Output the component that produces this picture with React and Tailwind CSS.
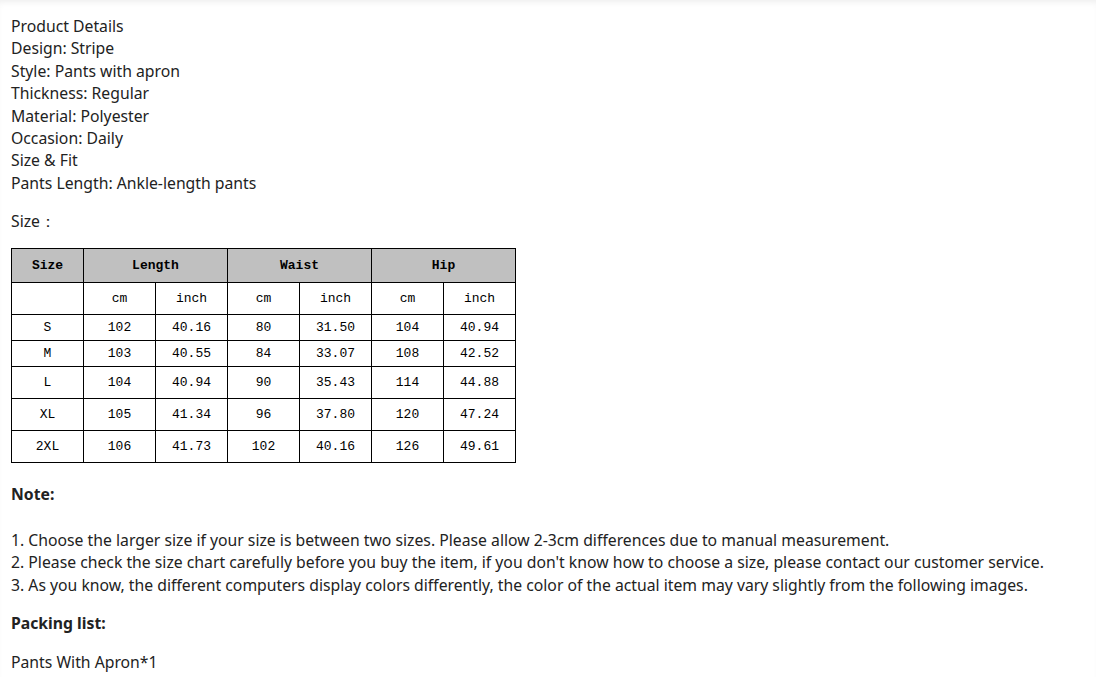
import React from "react";

const rows = [
  ["S", "102", "40.16", "80", "31.50", "104", "40.94", "h-[26px]"],
  ["M", "103", "40.55", "84", "33.07", "108", "42.52", "h-[26px]"],
  ["L", "104", "40.94", "90", "35.43", "114", "44.88", "h-[32px]"],
  ["XL", "105", "41.34", "96", "37.80", "120", "47.24", "h-[32px]"],
  ["2XL", "106", "41.73", "102", "40.16", "126", "49.61", "h-[32px]"],
];

const details = [
  "Product Details",
  "Design: Stripe",
  "Style: Pants with apron",
  "Thickness: Regular",
  "Material: Polyester",
  "Occasion: Daily",
  "Size & Fit",
  "Pants Length: Ankle-length pants",
];

export default function App() {
  const cell = "border border-black text-center p-0 font-normal";
  return (
    <div className="min-h-[677px] bg-white text-[#222] font-['Noto_Sans',sans-serif] text-[15.75px] leading-[22.4px] px-[11px] pt-[15px] shadow-[inset_0_5px_6px_-3px_rgba(0,0,0,0.07)]">
      <div>
        {details.map((d) => (
          <div key={d}>{d}</div>
        ))}
      </div>
      <p className="mt-[16px]">Size：</p>

      <table className="mt-[15px] border-collapse font-['Liberation_Mono',monospace] text-[13px] leading-none text-black">
        <tbody>
          <tr className="h-[34px] bg-[#c0c0c0]">
            <th className={`${cell} w-[72px] !font-bold`}>Size</th>
            <th colSpan={2} className={`${cell} w-[144px] !font-bold`}>Length</th>
            <th colSpan={2} className={`${cell} w-[144px] !font-bold`}>Waist</th>
            <th colSpan={2} className={`${cell} w-[144px] !font-bold`}>Hip</th>
          </tr>
          <tr className="h-[32px]">
            <td className={`${cell} w-[72px]`}></td>
            {["cm", "inch", "cm", "inch", "cm", "inch"].map((u, i) => (
              <td key={i} className={`${cell} w-[72px]`}>{u}</td>
            ))}
          </tr>
          {rows.map((r) => (
            <tr key={r[0]} className={r[7]}>
              {r.slice(0, 7).map((v, i) => (
                <td key={i} className={cell}>{v}</td>
              ))}
            </tr>
          ))}
        </tbody>
      </table>

      <p className="mt-[20px] font-bold">Note:</p>
      <div className="mt-[24px]">
        <div>1. Choose the larger size if your size is between two sizes. Please allow 2-3cm differences due to manual measurement.</div>
        <div>2. Please check the size chart carefully before you buy the item, if you don't know how to choose a size, please contact our customer service.</div>
        <div>3. As you know, the different computers display colors differently, the color of the actual item may vary slightly from the following images.</div>
      </div>
      <p className="mt-[16px] font-bold">Packing list:</p>
      <p className="mt-[16px]">Pants With Apron*1</p>
    </div>
  );
}
